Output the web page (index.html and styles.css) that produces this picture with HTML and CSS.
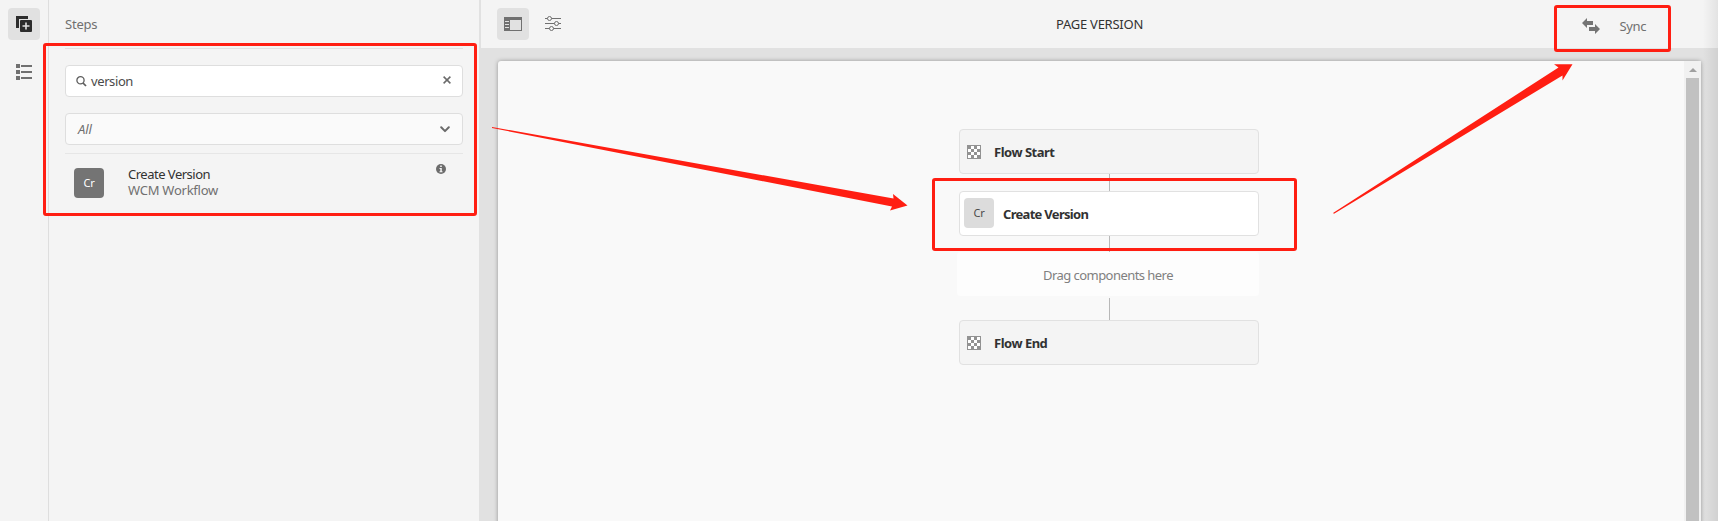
FILE: index.html
```html
<!DOCTYPE html>
<html lang="en">
<head>
<meta charset="utf-8">
<title>Page Version</title>
<link rel="stylesheet" href="styles.css">
</head>
<body>
<div class="app">
  <nav class="rail">
    <button class="tool active" aria-label="Add step">
      <svg width="16" height="16"><path d="M0 0h12v3H3v9H0z" fill="#2c2c2c"/><rect x="4" y="4" width="12" height="12" rx="1" fill="#2c2c2c"/><path d="M9.2 6.5h1.6v2.7h2.7v1.6h-2.7v2.7H9.2v-2.7H6.5V9.200h2.700z" fill="#e1e1e1"/></svg>
    </button>
    <button class="tool" aria-label="List">
      <svg width="16" height="16" fill="#707070"><path d="M0 0h4v4H0zM0 6h4v4H0zM0 12h4v4H0zM5 1h11v2H5zM5 7h11v2H5zM5 13h11v2H5z"/></svg>
    </button>
  </nav>
  <aside class="panel">
    <h2 class="panel-title"><span>Steps</span></h2>
    <div class="filters">
      <div class="field search">
        <svg width="11" height="11" fill="none" stroke="#5e5e5e"><circle cx="4.500" cy="4.300" r="3.600" stroke-width="1.300"/><path d="M7 7l3 3" stroke-width="1.700"/></svg>
        <span class="query">version</span>
        <svg class="clear" width="8" height="8" stroke="#6a6a6a" stroke-width="1.500"><path d="M.6.6l6.800 6.800M7.400.6L.6 7.400"/></svg>
      </div>
      <div class="field select">
        <em class="choice">All</em>
        <svg width="10" height="7" fill="none" stroke="#6a6a6a" stroke-width="2" stroke-linecap="round" stroke-linejoin="round"><path d="M1.200 1.300L5 5.100l3.800-3.800"/></svg>
      </div>
    </div>
    <div class="step">
      <span class="badge dark">Cr</span>
      <div class="step-text"><div class="step-name"><span>Create Version</span></div><div class="step-group"><span>WCM Workflow</span></div></div>
      <svg class="info" width="10" height="10"><circle cx="5" cy="5" r="5" fill="#6c6c6c"/><path d="M4.200 1.600h1.600v1.500H4.200zM3.500 4h2.300v3.200h.7v1h-3v-1h.8V5h-.8z" fill="#f4f4f4"/></svg>
    </div>
  </aside>
  <main class="main">
    <header class="topbar">
      <button class="tool active" aria-label="Toggle side panel">
        <svg width="18" height="14"><path fill="#707070" fill-rule="evenodd" d="M0 0h18v14H0zM6 3v10h11V3z"/><path d="M1 4.500h4M1 7.500h4M1 10.500h4" stroke="#e1e1e1"/></svg>
      </button>
      <button class="tool sliders" aria-label="Settings">
        <svg width="16" height="16" stroke="#707070" fill="#f4f4f4"><path d="M0 2.500h16M0 7.500h16M0 12.500h16" stroke-width="1"/><circle cx="4.500" cy="2.500" r="2"/><circle cx="11.500" cy="7.500" r="2"/><circle cx="6.500" cy="12.500" r="2"/></svg>
      </button>
      <h1 class="title"><span>PAGE VERSION</span></h1>
      <button class="sync">
        <svg width="18" height="16" fill="#747474"><path d="M0 5l5-5v3h6v4H5v3zM18 11l-5-5v3H7v4h6v3z"/></svg>
        <span class="sync-label">Sync</span>
      </button>
    </header>
    <div class="stage">
      <section class="sheet">
        <div class="flow">
          <div class="node"><svg class="checker" width="14" height="14"><rect x=".5" y=".5" width="13" height="13" fill="#fff" stroke="#929292"/><path fill="#929292" d="M1 1h3v3H1zM7 1h3v3H7zM4 4h3v3H4zM10 4h3v3h-3zM1 7h3v3H1zM7 7h3v3H7zM4 10h3v3H4zM10 10h3v3h-3z"/></svg><b>Flow Start</b></div>
          <i class="line first"></i>
          <div class="node created"><span class="badge">Cr</span><b>Create Version</b></div>
          <i class="line second"></i>
          <div class="drop"><span>Drag components here</span></div>
          <i class="line third"></i>
          <div class="node"><svg class="checker" width="14" height="14"><rect x=".5" y=".5" width="13" height="13" fill="#fff" stroke="#929292"/><path fill="#929292" d="M1 1h3v3H1zM7 1h3v3H7zM4 4h3v3H4zM10 4h3v3h-3zM1 7h3v3H1zM7 7h3v3H7zM4 10h3v3H4zM10 10h3v3h-3z"/></svg><b>Flow End</b></div>
        </div>
        <div class="scrollbar"><svg width="8" height="4"><path d="M0 4l4-4 4 4z" fill="#a0a0a0"/></svg><div class="thumb"></div></div>
      </section>
    </div>
  </main>
</div>
<div class="edge-shade"></div>
<svg class="notes" width="1718" height="521">
  <g fill="none" stroke="#ff1e12" stroke-width="3"><rect x="44.500" y="44.500" width="431" height="170" rx="1.500"/><rect x="933.500" y="179.500" width="362" height="70" rx="1.500"/><rect x="1555.500" y="6.500" width="114" height="44" rx="1.500"/></g>
  <g fill="#ff1e12"><path d="M492 127L893.500 198.500L893 194L907.500 205.500L890 210.500L892 206.500L492 128z"/><path d="M1333 213L1558.500 67.500L1554 64.300H1572.500L1562.500 80.500V75.500L1334 213.800z"/></g>
</svg>
</body>
</html>
```
FILE: styles.css
```css
* { box-sizing: border-box; }
body { margin: 0; overflow: hidden; background: #e1e1e1; color: #707070; font: 13px/16px "Noto Sans", sans-serif; }
button { border: 0; background: none; padding: 0; font: inherit; color: inherit; }
h1, h2 { margin: 0; font: inherit; }
svg { display: block; flex: none; }
.app { display: flex; width: 1718px; height: 521px; }
.rail { width: 49px; padding: 8px; display: flex; flex-direction: column; gap: 16px; background: #f4f4f4; border-right: 1px solid #dedede; }
.tool { width: 32px; height: 32px; flex: none; display: grid; place-items: center; border-radius: 4px; }
.tool.active { background: #e1e1e1; }
.panel { width: 430px; padding: 0 16px; background: #f4f4f4; }
.panel-title { height: 49px; padding-top: 16px; border-bottom: 1px solid #e1e1e1; letter-spacing: -.2px; }
.filters { display: grid; gap: 16px; padding: 16px 0 8px; border-bottom: 1px solid #e6e6e6; }
.field { height: 32px; display: flex; align-items: center; border: 1px solid #dedede; border-radius: 4px; background: #fff; }
.search { padding: 0 11px 0 10px; color: #4b4b4b; }
.query { margin: -1px 0 0 4px; letter-spacing: -.4px; }
.clear { margin: -2px 0 0 auto; }
.select { justify-content: space-between; padding: 0 12px; background: #fafafa; }
.choice { letter-spacing: -.1px; }
.step { display: flex; padding: 14px 17px 0 9px; }
.badge { width: 30px; height: 30px; display: grid; place-items: center; border-radius: 4px; background: #dcdcdc; color: #4b4b4b; font-size: 11px; letter-spacing: -.3px; }
.badge.dark { background: #747474; color: #fff; }
.step-text { margin: -2px 0 0 24px; }
.step-name { color: #323232; letter-spacing: -.5px; }
.step-group { letter-spacing: -.25px; }
.info { margin: -4px 0 0 auto; }
.main { width: 1239px; padding-left: 2px; }
.topbar { height: 48px; padding: 0 72px 0 16px; display: flex; align-items: center; background: #f4f4f4; }
.sliders { margin-left: 8px; }
.title { margin-left: 487px; color: #323232; white-space: nowrap; letter-spacing: -.25px; }
.sync { display: flex; align-items: center; gap: 20px; margin: 4px 0 0 auto; }
.sync-label { letter-spacing: -.4px; }
.stage { padding: 13px 17px 0; }
.sheet { height: 470px; display: flex; border-radius: 3px 3px 0 0; background: #f9f9f9; box-shadow: 0 0 4px rgba(0,0,0,.34); }
.flow { flex: 1; padding: 68px 0 0 461px; }
.node { width: 300px; height: 45px; padding-left: 7px; display: flex; align-items: center; border: 1px solid #e1e1e1; border-radius: 4px; background: #f4f4f4; color: #323232; }
.node b { margin-left: 13px; letter-spacing: -.5px; }
.created { padding-left: 4px; background: #fff; }
.created b { margin-left: 9px; letter-spacing: -.7px; }
.created .badge { margin-top: -2px; }
.line { display: block; width: 1px; height: 17px; margin-left: 150px; background: #b8b8b8; }
.second { height: 16px; }
.third { height: 22px; margin-top: 2px; }
.drop { width: 302px; height: 44px; margin-left: -2px; padding-top: 1px; display: grid; place-items: center; border-radius: 4px; background: #fdfdfd; color: #808080; letter-spacing: -.55px; }
.scrollbar { width: 17px; padding-top: 7px; background: #f1f1f1; display: flex; flex-direction: column; align-items: center; gap: 6px; }
.thumb { width: 13px; flex: 1; background: #c1c1c1; }
.edge-shade { position: absolute; top: 0; left: 1703px; width: 15px; height: 521px; background: linear-gradient(90deg, transparent, rgba(0,0,0,.07)); }
.notes { position: absolute; top: 0; left: 0; }
```
